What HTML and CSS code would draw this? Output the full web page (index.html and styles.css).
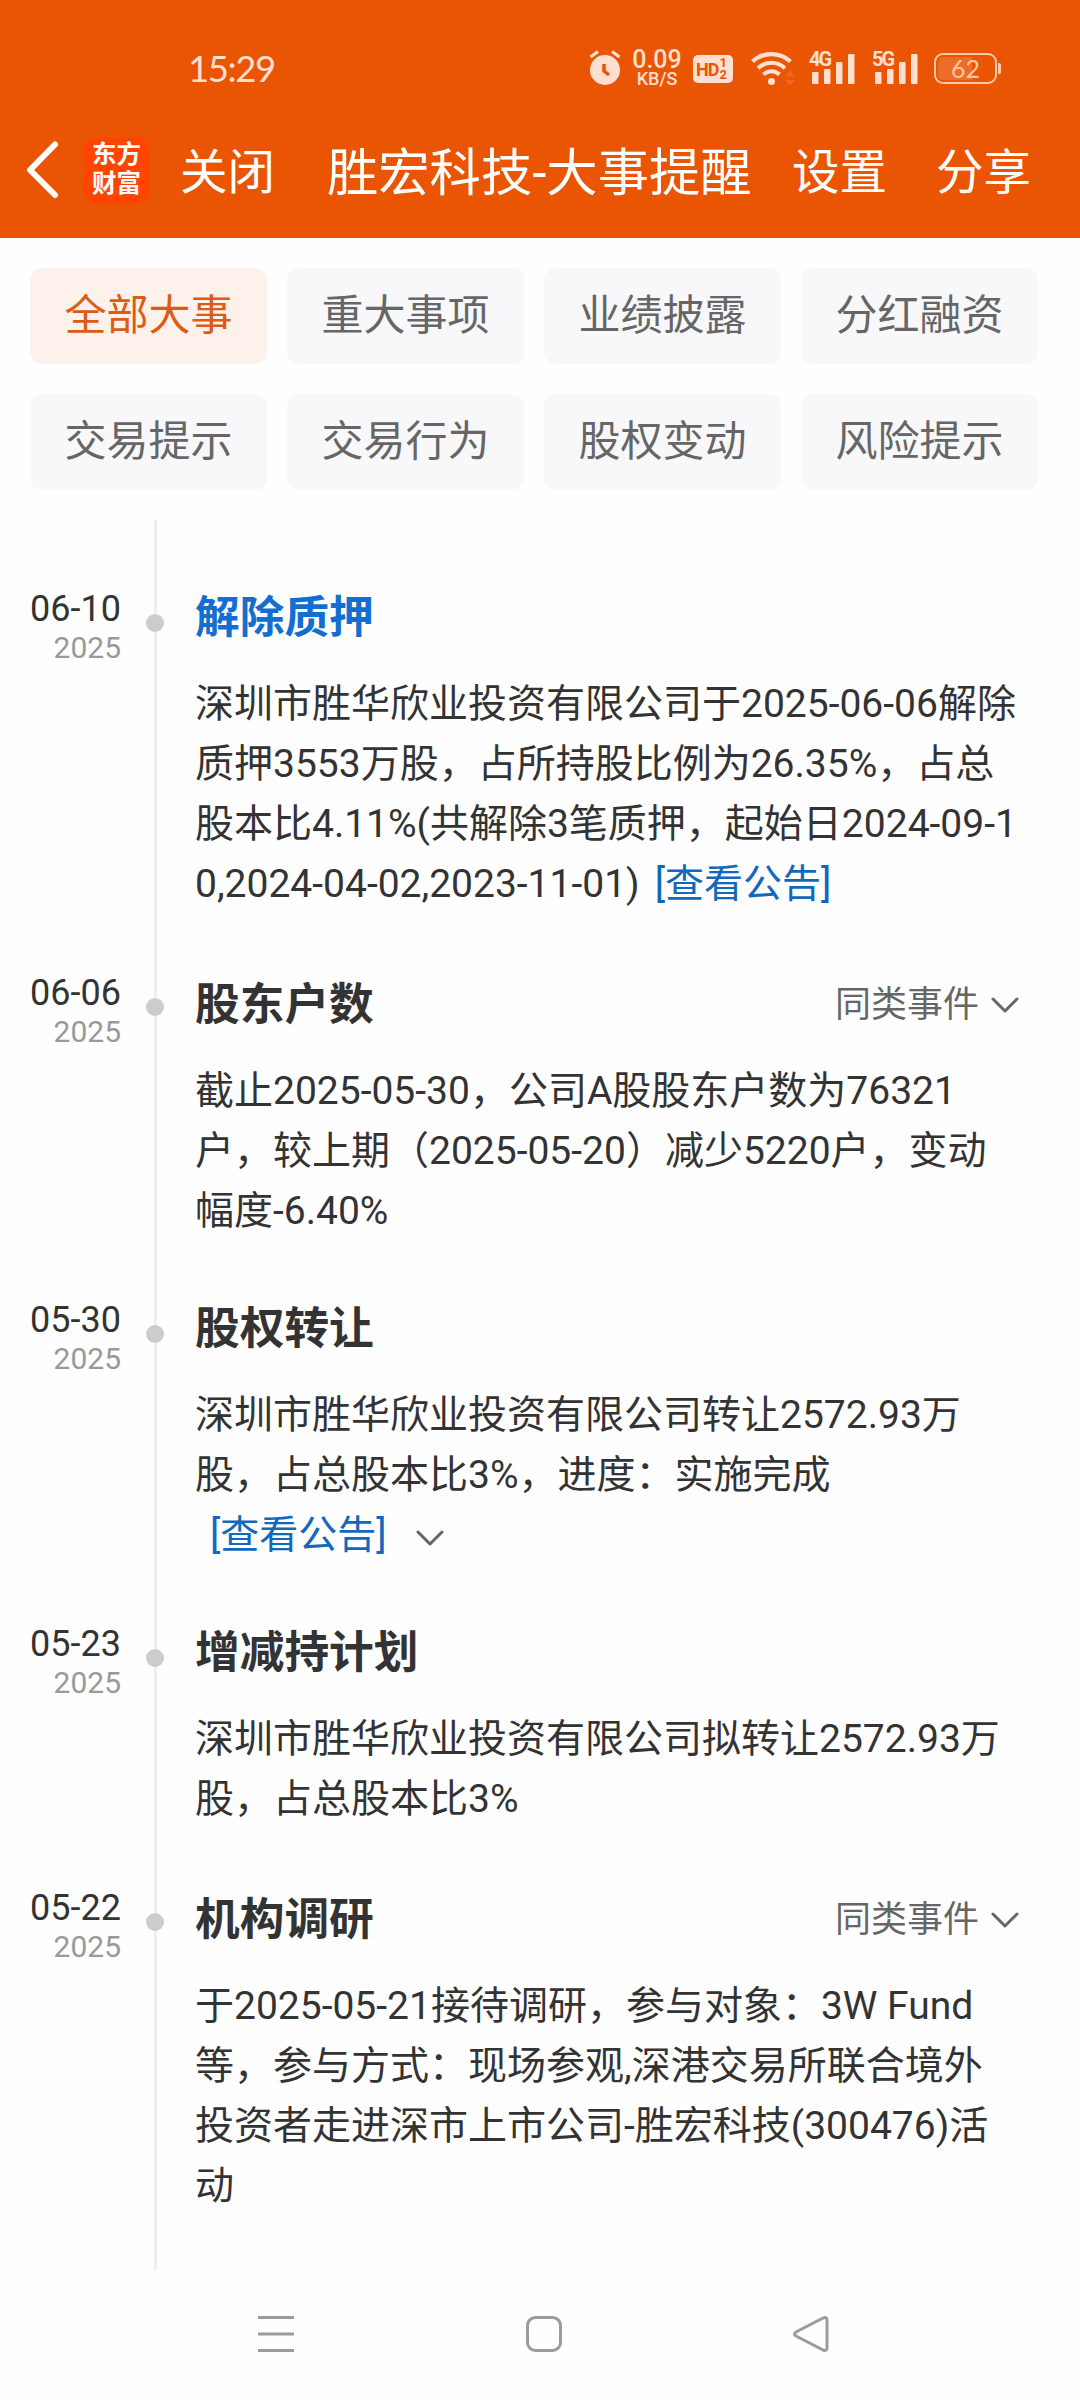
FILE: index.html
```
<!DOCTYPE html>
<html lang="zh-CN">
<head>
    <meta charset="UTF-8">
    <meta name="viewport" content="width=device-width, initial-scale=1.0">
    <title>胜宏科技-大事提醒</title>
    <link rel="stylesheet" href="styles.css">
</head>
<body>
    <header class="header">
        <div class="status-bar">
            <div class="time">15:29</div>
            <div class="status-icons">
                <svg class="alarm" width="32" height="36" viewBox="0 0 32 36">
                    <circle cx="16" cy="20" r="15" fill="currentColor"/>
                    <path d="M1.5 7L9 1.5M30.500 7L23 1.500" stroke="currentColor" stroke-width="3.200" fill="none"/>
                    <path d="M15 14v7l5 4" stroke="#ea5504" stroke-width="3.500" fill="none"/>
                </svg>
                <div class="speed">
                    <div class="speed-number">0.09</div>
                    <div class="speed-unit">KB/S</div>
                </div>
                <div class="hd">
                    <span>HD</span>
                    <div class="hd-sims"><span>1</span><span>2</span></div>
                </div>
                <svg class="wifi" width="45" height="36" viewBox="0 0 45 36">
                    <g fill="none" stroke="currentColor" stroke-width="4.200">
                        <path d="M1.500 11.500A28 28 0 0 1 39.500 11.500"/>
                        <path d="M7 18.200A19.500 19.500 0 0 1 34 18.200"/>
                        <path d="M12.500 24.500A11.500 11.500 0 0 1 28.500 24.500"/>
                    </g>
                    <circle cx="20.500" cy="31.500" r="3.500" fill="currentColor"/>
                    <path d="M34 26.500h10l-5-6zM34 30h10l-5 5.500z" fill="#ee6a26"/>
                </svg>
                <div class="signal signal-4g">
                    <span>4G</span>
                    <svg width="46" height="32" viewBox="0 0 46 32" fill="currentColor">
                        <rect x="3" y="20" width="6.500" height="12" rx="1"/>
                        <rect x="15" y="17" width="6.500" height="15" rx="1"/>
                        <rect x="27" y="10" width="6.500" height="22" rx="1"/>
                        <rect x="39" y="2" width="6.500" height="30" rx="1"/>
                    </svg>
                </div>
                <div class="signal signal-5g">
                    <span>5G</span>
                    <svg width="46" height="32" viewBox="0 0 46 32" fill="currentColor">
                        <rect x="3" y="20" width="6.500" height="12" rx="1"/>
                        <rect x="15" y="17" width="6.500" height="15" rx="1"/>
                        <rect x="27" y="10" width="6.500" height="22" rx="1"/>
                        <rect x="39" y="2" width="6.500" height="30" rx="1"/>
                    </svg>
                </div>
                <div class="battery">
                    <div class="battery-level">62</div>
                </div>
                <div class="battery-tip"></div>
            </div>
        </div>
        <div class="title-bar">
            <svg class="back" width="34" height="58" viewBox="0 0 34 58">
                <path d="M29 3.500L4 29L29 54" fill="none" stroke="#fff" stroke-width="6" stroke-linecap="round" stroke-linejoin="round"/>
            </svg>
            <div class="logo">东方<br>财富</div>
            <div class="bar-btn close-btn">关闭</div>
            <h1>胜宏科技-大事提醒</h1>
            <div class="bar-btn set-btn">设置</div>
            <div class="bar-btn">分享</div>
        </div>
    </header>

    <div class="tabs">
        <div class="tab active">全部大事</div>
        <div class="tab">重大事项</div>
        <div class="tab">业绩披露</div>
        <div class="tab">分红融资</div>
        <div class="tab">交易提示</div>
        <div class="tab">交易行为</div>
        <div class="tab">股权变动</div>
        <div class="tab">风险提示</div>
    </div>

    <div class="timeline">
        <div class="event">
            <div class="date">
                <div class="day">06-10</div>
                <div class="year">2025</div>
            </div>
            <div class="axis"><div class="dot"></div></div>
            <div class="content">
                <div class="event-head">
                    <h2 class="blue">解除质押</h2>
                </div>
                <p>深圳市胜华欣业投资有限公司于2025-06-06解除<br>质押3553万股，占所持股比例为26.35%，占总<br>股本比4.11%(共解除3笔质押，起始日2024-09-1<br>0,2024-04-02,2023-11-01)<a class="link">[查看公告]</a></p>
            </div>
        </div>
        <div class="event">
            <div class="date">
                <div class="day">06-06</div>
                <div class="year">2025</div>
            </div>
            <div class="axis"><div class="dot"></div></div>
            <div class="content">
                <div class="event-head with-more">
                    <h2>股东户数</h2>
                    <div class="more">同类事件
                        <svg width="28" height="18" viewBox="0 0 28 18"><path d="M2 3L14 15L26 3"/></svg>
                    </div>
                </div>
                <p>截止2025-05-30，公司A股股东户数为76321<br>户，较上期（2025-05-20）减少5220户，变动<br>幅度-6.40%</p>
            </div>
        </div>
        <div class="event">
            <div class="date">
                <div class="day">05-30</div>
                <div class="year">2025</div>
            </div>
            <div class="axis"><div class="dot"></div></div>
            <div class="content">
                <div class="event-head">
                    <h2>股权转让</h2>
                </div>
                <p>深圳市胜华欣业投资有限公司转让2572.93万<br>股，占总股本比3%，进度：实施完成<br><a class="link">[查看公告]</a><svg class="expand" width="28" height="18" viewBox="0 0 28 18"><path d="M2 3L14 15L26 3"/></svg></p>
            </div>
        </div>
        <div class="event">
            <div class="date">
                <div class="day">05-23</div>
                <div class="year">2025</div>
            </div>
            <div class="axis"><div class="dot"></div></div>
            <div class="content">
                <div class="event-head">
                    <h2>增减持计划</h2>
                </div>
                <p>深圳市胜华欣业投资有限公司拟转让2572.93万<br>股，占总股本比3%</p>
            </div>
        </div>
        <div class="event">
            <div class="date">
                <div class="day">05-22</div>
                <div class="year">2025</div>
            </div>
            <div class="axis"><div class="dot"></div></div>
            <div class="content">
                <div class="event-head with-more">
                    <h2>机构调研</h2>
                    <div class="more">同类事件
                        <svg width="28" height="18" viewBox="0 0 28 18"><path d="M2 3L14 15L26 3"/></svg>
                    </div>
                </div>
                <p>于2025-05-21接待调研，参与对象：3W Fund<br>等，参与方式：现场参观,深港交易所联合境外<br>投资者走进深市上市公司-胜宏科技(300476)活<br>动</p>
            </div>
        </div>
    </div>

    <!-- System navigation -->
    <nav class="nav-bar">
        <svg width="36" height="36" viewBox="0 0 36 36"><path d="M0 1.500H36M0 18H36M0 34.500H36"/></svg>
        <svg width="36" height="36" viewBox="0 0 36 36"><rect x="1.500" y="1.500" width="33" height="33" rx="8"/></svg>
        <svg width="36" height="36" viewBox="0 0 36 36"><path d="M30 2L3 16Q0 18 3 20L30 34Q34 35.500 34 32V4Q34 0.500 30 2Z"/></svg>
    </nav>
</body>
</html>
```
FILE: styles.css
```
*, *:before, *:after {
    margin: 0;
    padding: 0;
    box-sizing: border-box;
}
body {
    width: 1080px;
    height: 2400px;
    overflow: hidden;
    font-family: Roboto, "Noto Sans CJK SC", sans-serif;
    background-color: #fefefe;
    color: #333;
    display: flex;
    flex-direction: column;
}

/* Header */
.header {
    height: 238px;
    background-color: #ea5504;
    color: #fff;
}

.status-bar {
    height: 104px;
    padding: 32px 0 0 188px;
    display: flex;
    align-items: center;
    color: #ffdfcf;
}

.time {
    width: 401px;
    font-family: Lato, sans-serif;
    font-size: 36.5px;
    letter-spacing: -1.4px;
    line-height: 40px;
}

.status-icons {
    display: flex;
    align-items: center;
}

.speed {
    width: 52px;
    margin-left: 10px;
    display: flex;
    flex-direction: column;
    align-items: center;
    font-weight: 500;
}

.speed-number {
    font-size: 25px;
    line-height: 21px;
}

.speed-unit {
    font-size: 18px;
    line-height: 17px;
}

.hd {
    width: 40px;
    height: 28px;
    margin: 2px 0 0 10px;
    padding-left: 3px;
    border-radius: 5px;
    background-color: #ffdfcf;
    color: #ea5504;
    display: flex;
    align-items: center;
    font-size: 18px;
    font-weight: bold;
    letter-spacing: -1px;
}

.hd-sims {
    display: flex;
    flex-direction: column;
    font-size: 13px;
    line-height: 12px;
    letter-spacing: 0;
    margin-left: 1px;
}

.wifi {
    margin-left: 18px;
}

.signal {
    position: relative;
    height: 32px;
    margin-left: 13px;
}

.signal-5g {
    margin-left: 17px;
}

.signal span {
    position: absolute;
    left: 0;
    top: -3px;
    font-size: 20px;
    line-height: 20px;
    font-weight: bold;
    letter-spacing: -2px;
}

.battery {
    width: 63px;
    height: 31px;
    margin: 1px 0 0 16px;
    padding: 2px;
    border: 2px solid #ffc8a6;
    border-radius: 9px;
}

.battery-level {
    height: 23px;
    border-radius: 5px;
    background: linear-gradient(to right, #ed6c27 62%, transparent 62%);
    font-family: Lato, sans-serif;
    font-size: 25px;
    line-height: 22px;
    text-align: center;
    color: #ffc8a6;
}

.battery-tip {
    width: 3px;
    height: 11px;
    margin-left: 1px;
    border-radius: 0 2px 2px 0;
    background-color: #ffc8a6;
}

.title-bar {
    height: 134px;
    padding: 0 49px 2px 26px;
    display: flex;
    align-items: center;
}

.logo {
    width: 67px;
    height: 67px;
    margin-left: 23px;
    padding-top: 3px;
    border-radius: 14px;
    background-color: #ff4500;
    font-size: 24.5px;
    font-weight: bold;
    line-height: 29px;
    text-align: center;
}

.bar-btn {
    padding-top: 6px;
    font-size: 47.5px;
    line-height: 60px;
    white-space: nowrap;
}

.close-btn {
    margin-left: 30px;
}

.title-bar h1 {
    margin-left: 52px;
    padding-top: 7px;
    font-size: 51.3px;
    font-weight: normal;
    line-height: 60px;
    white-space: nowrap;
}

.set-btn {
    margin: 0 49px 0 auto;
}

/* Category tabs */
.tabs {
    padding: 30px;
    display: grid;
    grid-template-columns: repeat(4, 237px);
    gap: 30px 20px;
}

.tab {
    height: 96px;
    border-radius: 12px;
    background-color: #f8f8fa;
    color: #666;
    font-size: 42px;
    line-height: 96px;
    text-align: center;
}

.tab.active {
    background-color: #fdf1eb;
    color: #dd5b13;
}

/* Timeline */
.timeline {
    height: 1746px;
    display: flex;
    flex-direction: column;
}

.event {
    display: flex;
}

.event:first-child .content,
.event:first-child .date,
.event:first-child .axis {
    padding-top: 64px;
}

.date {
    width: 121px;
    text-align: right;
}

.day {
    font-size: 36px;
    line-height: 50px;
}

.year {
    font-size: 30px;
    line-height: 28px;
    color: #999;
}

.axis {
    width: 3px;
    margin-left: 33px;
    background-color: #eee;
}

.dot {
    width: 18px;
    height: 18px;
    margin: 30px 0 0 -8px;
    border-radius: 50%;
    background-color: #ccc;
}

.content {
    width: 824px;
    margin-left: 38px;
    padding-bottom: 54px;
}

.event:last-child .content {
    padding-bottom: 53px;
}

.event-head {
    height: 63px;
    margin-bottom: 27px;
    display: flex;
    justify-content: space-between;
    align-items: center;
}

.event-head.with-more {
    height: 66px;
    padding-top: 3px;
}

.event-head h2 {
    padding-top: 5px;
    font-size: 44.7px;
    font-weight: bold;
    line-height: 63px;
}

.event-head .blue {
    padding-top: 6px;
    color: #126ed0;
}

.more {
    padding-top: 4px;
    display: flex;
    align-items: center;
    gap: 12px;
    font-size: 36px;
    line-height: 60px;
    color: #666;
}

.more svg path,
.expand path {
    fill: none;
    stroke: #666;
    stroke-width: 3;
    stroke-linecap: round;
    stroke-linejoin: round;
}

.content p {
    font-size: 39px;
    line-height: 60px;
    white-space: nowrap;
}

.link {
    margin-left: 15px;
    color: #1268bd;
}

.expand {
    margin: 0 0 1px 29px;
}

/* Bottom navigation */
.nav-bar {
    flex: 1;
    padding: 2px 251px 0 258px;
    display: flex;
    justify-content: space-between;
    align-items: center;
}

.nav-bar svg {
    fill: none;
    stroke: #9b9b9b;
    stroke-width: 3;
}
```
